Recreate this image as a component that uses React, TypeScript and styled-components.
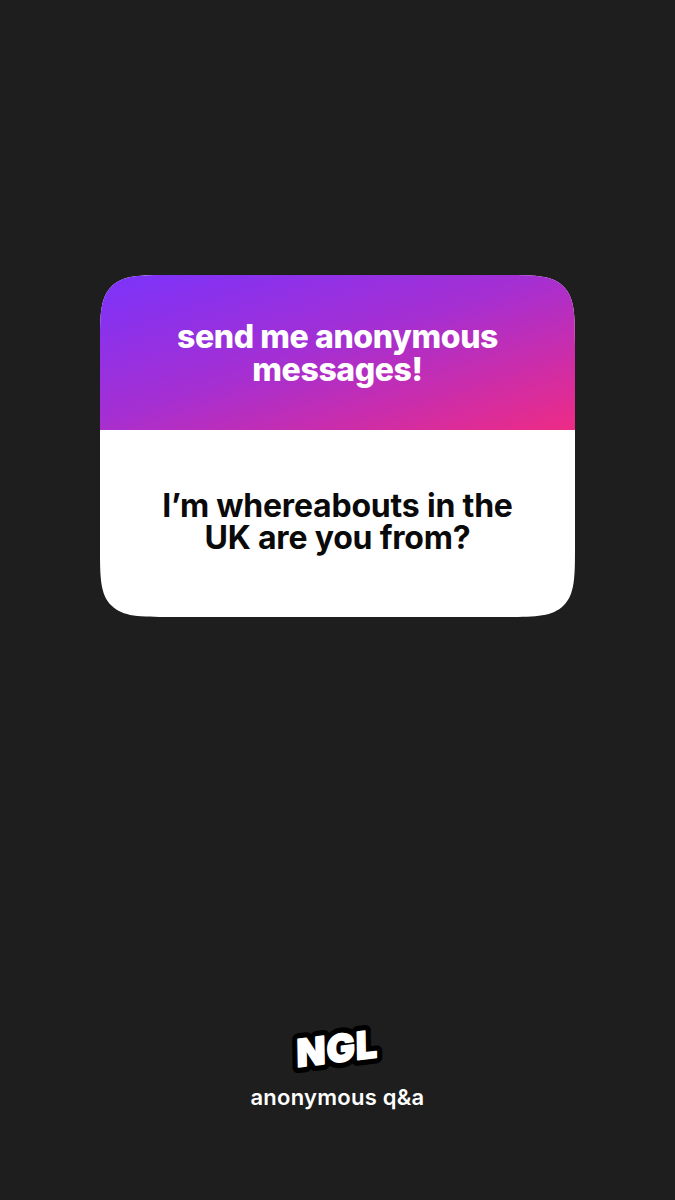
import { createGlobalStyle } from "styled-components";
import styled from "styled-components";

const GlobalStyle = createGlobalStyle`
  html, body {
    margin: 0;
    padding: 0;
    background: #1e1e1e;
  }
`;

export default function App() {
  return (
    <>
      <GlobalStyle />
      <Page>
        <Card>
          <CardHeader>
            <Prompt>
              send me anonymous
              <br />
              messages!
            </Prompt>
          </CardHeader>
          <CardBody>
            <Question>
              I’m whereabouts in the
              <br />
              UK are you from?
            </Question>
          </CardBody>
        </Card>
        <Footer>
          <LogoMark viewBox="0 0 96 52" role="img" aria-label="NGL">
            <g transform="rotate(-7 48 26) skewX(-6)">
              <LogoOutline x="9" y="41" textLength="81">
                NGL
              </LogoOutline>
              <LogoFill x="9" y="41" textLength="81">
                NGL
              </LogoFill>
            </g>
          </LogoMark>
          <Tagline>anonymous q&amp;a</Tagline>
        </Footer>
      </Page>
    </>
  );
}

const Page = styled.main`
  display: flex;
  flex-direction: column;
  align-items: center;
  justify-content: space-between;
  box-sizing: border-box;
  width: 675px;
  height: 1200px;
  padding: 275px 0 91px;
  background: #1e1e1e;
  font-family: Inter, "Liberation Sans", sans-serif;
`;

const Card = styled.section`
  width: 475px;
  height: 342px;
  border-radius: 72px;
  corner-shape: squircle;
  overflow: hidden;
  background: #ffffff;
`;

const CardHeader = styled.header`
  display: flex;
  align-items: center;
  justify-content: center;
  box-sizing: border-box;
  height: 155px;
  padding-top: 1px;
  background: linear-gradient(162deg, #7b33fb 0%, #a52fd2 47%, #ee2b85 100%);
`;

const Prompt = styled.h1`
  margin: 0;
  color: #ffffff;
  font-size: 32px;
  font-weight: 800;
  line-height: 33px;
  letter-spacing: -0.4px;
  text-align: center;
`;

const CardBody = styled.div`
  display: flex;
  align-items: center;
  justify-content: center;
  box-sizing: border-box;
  height: 187px;
  padding-bottom: 4px;
`;

const Question = styled.p`
  margin: 0;
  color: #0a0a0a;
  font-size: 32px;
  font-weight: 700;
  line-height: 32px;
  letter-spacing: -0.2px;
  text-align: center;
`;

const Footer = styled.footer`
  display: flex;
  flex-direction: column;
  align-items: center;
  gap: 12px;
`;

const LogoMark = styled.svg`
  display: block;
  width: 96px;
  height: 52px;
  overflow: visible;
`;

const LogoOutline = styled.text`
  font-family: Inter, "Liberation Sans", sans-serif;
  font-size: 38px;
  font-weight: 900;
  fill: #000000;
  stroke: #000000;
  stroke-width: 12px;
  stroke-linejoin: round;
`;

const LogoFill = styled.text`
  font-family: Inter, "Liberation Sans", sans-serif;
  font-size: 38px;
  font-weight: 900;
  fill: #ffffff;
  stroke: #ffffff;
  stroke-width: 1.5px;
  stroke-linejoin: round;
`;

const Tagline = styled.div`
  color: #ffffff;
  font-size: 22px;
  font-weight: 600;
  line-height: 24px;
  letter-spacing: 0.25px;
`;
